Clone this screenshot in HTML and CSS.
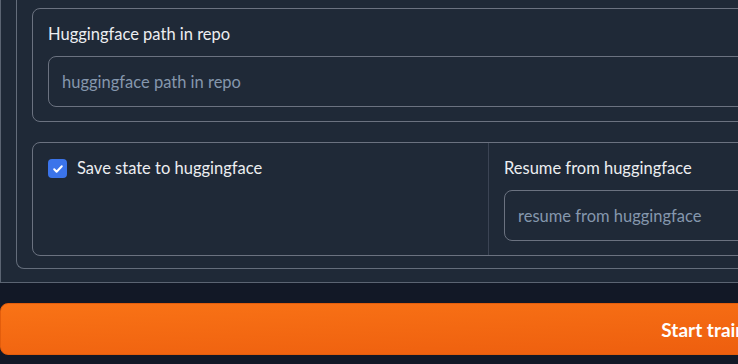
FILE: index.html
```html
<!DOCTYPE html>
<html lang="en">

<head>
    <meta charset="UTF-8">
    <meta name="viewport" content="width=device-width, initial-scale=1.0">
    <title>Training settings</title>
    <link rel="stylesheet" href="styles.css">
</head>

<body>

    <div class="page">
        <div class="outer">
            <div class="group">
                <div class="block">
                    <label class="label" for="hf-path">Huggingface path in repo</label>
                    <input class="textbox" id="hf-path" type="text" placeholder="huggingface path in repo">
                </div>

                <div class="block row">
                    <div class="col">
                        <label class="check">
                            <span class="check-box">
                                <svg width="12" height="12" viewBox="0 0 12 12">
                                    <path d="M2.2 6.3l2.4 2.4 5.2-5.4" fill="none" stroke="#fff" stroke-width="2" stroke-linecap="round" stroke-linejoin="round" />
                                </svg>
                            </span>
                            Save state to huggingface
                        </label>
                    </div>
                    <div class="col">
                        <label class="label" for="hf-resume">Resume from huggingface</label>
                        <input class="textbox" id="hf-resume" type="text" placeholder="resume from huggingface">
                    </div>
                    <div class="col"></div>
                </div>
            </div>
        </div>

        <button class="start-btn">Start training</button>
    </div>

</body>

</html>
```

FILE: styles.css
```css
body {
    font-family: Lato, "Open Sans", sans-serif;
    margin: 0;
    padding: 0;
    background-color: #121826;
    overflow: hidden;
}

.page {
    width: 1433px;
}

.outer {
    background-color: #1f2937;
    border-left: 1px solid #5b6472;
    border-bottom: 1px solid #5b6472;
    padding: 0 0 13px 15px;
}

.group {
    border-left: 1px solid #646d7b;
    border-bottom: 1px solid #646d7b;
    border-radius: 0 0 0 8px;
    padding: 8px 0 12px 15px;
}

.block {
    border: 1px solid #6b7280;
    border-radius: 8px;
    padding: 14px 15px 14px;
}

.block + .block {
    margin-top: 20px;
}

.label {
    display: block;
    color: #eceef1;
    font-size: 16.5px;
    line-height: 23px;
    margin-bottom: 10px;
}

.textbox {
    display: block;
    box-sizing: border-box;
    width: 100%;
    height: 51px;
    padding: 0 13px;
    background-color: #1f2937;
    border: 1px solid #6b7280;
    border-radius: 8px;
    color: #e5e7eb;
    font-family: inherit;
    font-size: 16.5px;
    outline: none;
}

.textbox::placeholder {
    color: #8597ad;
}

.row {
    display: grid;
    grid-template-columns: 455px 1fr 1fr;
    padding: 0;
}

.col {
    padding: 14px 15px 14px;
}

.col + .col {
    border-left: 1px solid #3b4454;
}

.check {
    display: flex;
    align-items: center;
    gap: 10px;
    color: #eceef1;
    font-size: 16.5px;
    line-height: 23px;
}

.check-box {
    display: flex;
    align-items: center;
    justify-content: center;
    width: 19px;
    height: 19px;
    border-radius: 4px;
    background-color: #3b74ea;
}

.start-btn {
    display: block;
    width: 1433px;
    height: 52px;
    margin-top: 20px;
    border: 1px solid #e35d0c;
    border-radius: 8px;
    background: linear-gradient(to bottom right, #f97316, #ea580c);
    color: #fff;
    font-family: inherit;
    font-size: 19px;
    font-weight: bold;
}
```
